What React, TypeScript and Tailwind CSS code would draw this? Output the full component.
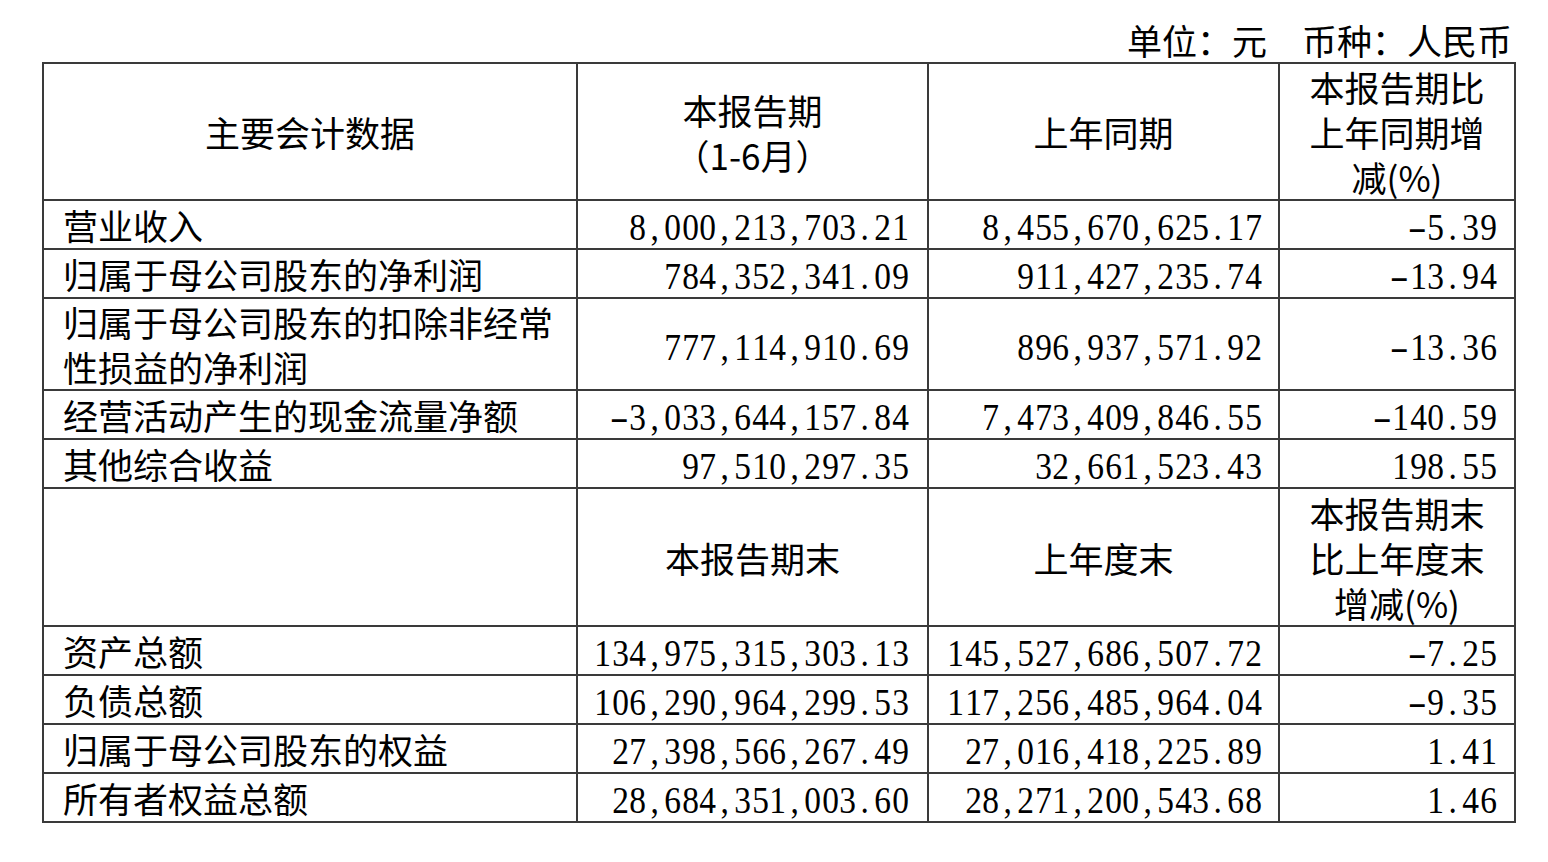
import React from 'react';

const cjk = "font-['Noto_Sans_CJK_SC',sans-serif]";

type Row = {
  label: string[];
  cur: string;
  prev: string;
  diff: string;
};

const flowRows: Row[] = [
  { label: ['营业收入'], cur: '8,000,213,703.21', prev: '8,455,670,625.17', diff: '-5.39' },
  { label: ['归属于母公司股东的净利润'], cur: '784,352,341.09', prev: '911,427,235.74', diff: '-13.94' },
  {
    label: ['归属于母公司股东的扣除非经常', '性损益的净利润'],
    cur: '777,114,910.69',
    prev: '896,937,571.92',
    diff: '-13.36',
  },
  { label: ['经营活动产生的现金流量净额'], cur: '-3,033,644,157.84', prev: '7,473,409,846.55', diff: '-140.59' },
  { label: ['其他综合收益'], cur: '97,510,297.35', prev: '32,661,523.43', diff: '198.55' },
];

const stockRows: Row[] = [
  { label: ['资产总额'], cur: '134,975,315,303.13', prev: '145,527,686,507.72', diff: '-7.25' },
  { label: ['负债总额'], cur: '106,290,964,299.53', prev: '117,256,485,964.04', diff: '-9.35' },
  { label: ['归属于母公司股东的权益'], cur: '27,398,566,267.49', prev: '27,016,418,225.89', diff: '1.41' },
  { label: ['所有者权益总额'], cur: '28,684,351,003.60', prev: '28,271,200,543.68', diff: '1.46' },
];

const cell = 'border-2 border-[#3a3a3a] py-0 align-middle';

// half-width digits, one fixed cell per character like the source document
function Num({ value }: { value: string }) {
  return (
    <span className="inline-flex font-['Liberation_Serif',serif] text-[38px] leading-[40px] align-middle">
      {value.split('').map((ch, i) => (
        <span key={i} className="inline-block w-[17.5px] text-center">
          <span className={`inline-block ${ch === '-' ? 'scale-x-[1.5]' : 'scale-x-[0.88]'}`}>{ch}</span>
        </span>
      ))}
    </span>
  );
}

function HeadCell({ lines }: { lines: string[] }) {
  return (
    <td className={`${cell} px-0 text-center leading-[45px]`}>
      {lines.map((l, i) => (
        <div key={i}>{l}</div>
      ))}
    </td>
  );
}

function DataRow({ row }: { row: Row }) {
  const tall = row.label.length > 1;
  return (
    <tr className={tall ? 'h-[92px]' : 'h-[49px]'}>
      <td className={`${cell} pl-[19px] pr-2 leading-[45px]`}>
        {row.label.map((l, i) => (
          <div key={i}>{l}</div>
        ))}
      </td>
      <td className={`${cell} pl-0 pr-[19px] text-right leading-[40px]`}>
        <Num value={row.cur} />
      </td>
      <td className={`${cell} pl-0 pr-[17px] text-right leading-[40px]`}>
        <Num value={row.prev} />
      </td>
      <td className={`${cell} pl-0 pr-[18px] text-right leading-[40px]`}>
        <Num value={row.diff} />
      </td>
    </tr>
  );
}

export default function App() {
  return (
    <div className={`min-h-screen bg-white text-black ${cjk} text-[35px]`}>
      <div className="w-[1472px] ml-[42px] pt-[18px]">
        <div className="text-right leading-[44px] pr-[2px]">单位：元　币种：人民币</div>
        <table className="w-[1472px] table-fixed border-collapse">
          <colgroup>
            <col className="w-[534px]" />
            <col className="w-[351px]" />
            <col className="w-[351px]" />
            <col className="w-[236px]" />
          </colgroup>
          <tbody>
            <tr className="h-[136px]">
              <HeadCell lines={['主要会计数据']} />
              <HeadCell lines={['本报告期', '（1-6月）']} />
              <HeadCell lines={['上年同期']} />
              <HeadCell lines={['本报告期比', '上年同期增', '减(%)']} />
            </tr>
            {flowRows.map((r) => (
              <DataRow key={r.label.join('')} row={r} />
            ))}
            <tr className="h-[138px]">
              <HeadCell lines={['']} />
              <HeadCell lines={['本报告期末']} />
              <HeadCell lines={['上年度末']} />
              <HeadCell lines={['本报告期末', '比上年度末', '增减(%)']} />
            </tr>
            {stockRows.map((r) => (
              <DataRow key={r.label.join('')} row={r} />
            ))}
          </tbody>
        </table>
      </div>
    </div>
  );
}
